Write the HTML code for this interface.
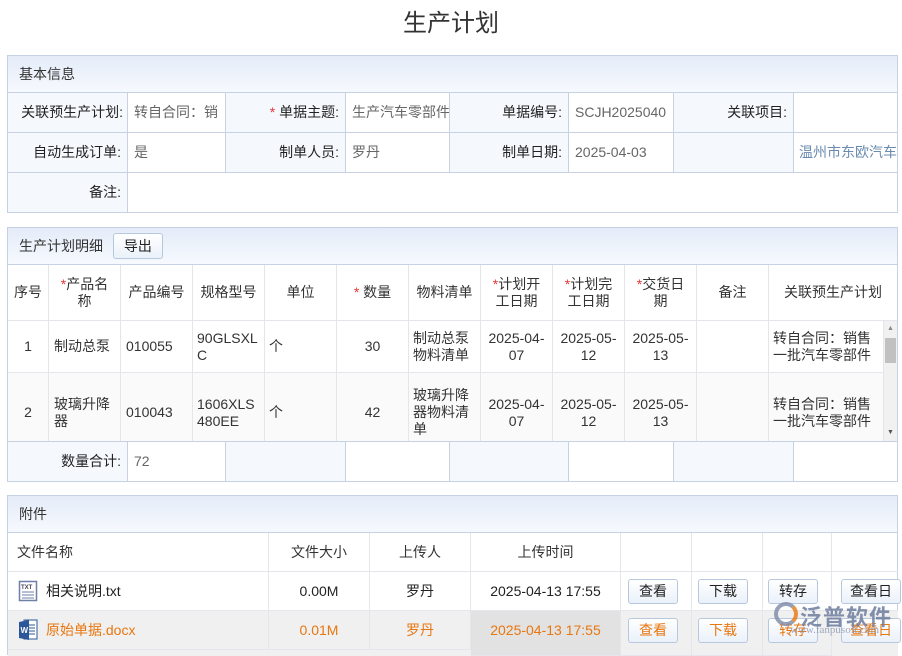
<!DOCTYPE html>
<html><head><meta charset="utf-8"><style>
*{box-sizing:border-box;margin:0;padding:0}
body{width:902px;height:649px;overflow:hidden;background:#fff;font-family:"Liberation Sans","Noto Sans CJK SC",sans-serif;font-size:14px;color:#333;position:relative}
.abs{position:absolute}
.title{left:0;width:902px;top:3px;text-align:center;font-size:24px;color:#333}
.panel{position:absolute;left:7px;width:891px;border:1px solid #c6d2e3}
.ph{height:37px;background:linear-gradient(#e4ecf8,#f6f9fe);border-bottom:1px solid #c6d2e3;padding-left:11px;line-height:36px;font-size:14px}
.c{position:absolute;border-right:1px solid #c6d2e3;border-bottom:1px solid #c6d2e3;display:flex;align-items:center;padding:0 6px;line-height:17px}
.lab{background:#f5f9fe;justify-content:flex-end;color:#222}
.val{color:#666}
.g{border-color:#e3e6ea}
.red{color:#e33}
.btn{position:absolute;height:25px;border:1px solid #b8c8dc;border-radius:3px;background:linear-gradient(#fff,#eaf1fa);text-align:center;line-height:23px;font-size:14px;color:#222}
</style></head><body>
<div class="abs title">生产计划</div>

<div class="panel" style="top:55px;height:158px">
<div class="ph">基本信息</div>
<div class="c lab" style="left:0;top:37px;width:120px;height:40px;padding:0 4px;white-space:nowrap">关联预生产计划:</div>
<div class="c val" style="left:120px;top:37px;width:98px;height:40px;white-space:nowrap;overflow:hidden">转自合同：销</div>
<div class="c lab" style="left:218px;top:37px;width:120px;height:40px"><span class="red">*</span>&nbsp;单据主题:</div>
<div class="c val" style="left:338px;top:37px;width:104px;height:40px;white-space:nowrap;overflow:hidden">生产汽车零部件</div>
<div class="c lab" style="left:442px;top:37px;width:119px;height:40px">单据编号:</div>
<div class="c val" style="left:561px;top:37px;width:105px;height:40px">SCJH2025040</div>
<div class="c lab" style="left:666px;top:37px;width:120px;height:40px">关联项目:</div>
<div class="c val" style="left:786px;top:37px;width:104px;height:40px;border-right:none"></div>
<div class="c lab" style="left:0;top:77px;width:120px;height:40px">自动生成订单:</div>
<div class="c val" style="left:120px;top:77px;width:98px;height:40px">是</div>
<div class="c lab" style="left:218px;top:77px;width:120px;height:40px">制单人员:</div>
<div class="c val" style="left:338px;top:77px;width:104px;height:40px">罗丹</div>
<div class="c lab" style="left:442px;top:77px;width:119px;height:40px">制单日期:</div>
<div class="c val" style="left:561px;top:77px;width:105px;height:40px">2025-04-03</div>
<div class="c lab" style="left:666px;top:77px;width:120px;height:40px"></div>
<div class="c val" style="left:786px;top:77px;width:104px;height:40px;border-right:none;white-space:nowrap;overflow:hidden;color:#6a8bb0;padding:0 5px">温州市东欧汽车</div>
<div class="c lab" style="left:0;top:117px;width:120px;height:39px;border-bottom:none">备注:</div>
</div>

<div class="panel" style="top:227px;height:255px">
<div class="ph">生产计划明细 <span class="btn" style="position:relative;display:inline-block;width:50px;height:26px;line-height:24px;margin-left:6px;top:0">导出</span></div>
<div style="position:absolute;left:0;top:37px;width:889px;height:176px">
<div class="c g" style="left:0;top:0;width:41px;height:56px;justify-content:center;padding:0">序号</div>
<div class="c g" style="left:41px;top:0;width:72px;height:56px;justify-content:center;text-align:center"><span><span class="red">*</span>产品名<br>称</span></div>
<div class="c g" style="left:113px;top:0;width:72px;height:56px;justify-content:center;padding:0">产品编号</div>
<div class="c g" style="left:185px;top:0;width:72px;height:56px;justify-content:center;padding:0">规格型号</div>
<div class="c g" style="left:257px;top:0;width:72px;height:56px;justify-content:center">单位</div>
<div class="c g" style="left:329px;top:0;width:72px;height:56px;justify-content:center"><span><span class="red">*</span>&nbsp;数量</span></div>
<div class="c g" style="left:401px;top:0;width:72px;height:56px;justify-content:center;padding:0">物料清单</div>
<div class="c g" style="left:473px;top:0;width:72px;height:56px;justify-content:center;text-align:center;padding:0"><span><span class="red">*</span>计划开<br>工日期</span></div>
<div class="c g" style="left:545px;top:0;width:72px;height:56px;justify-content:center;text-align:center;padding:0"><span><span class="red">*</span>计划完<br>工日期</span></div>
<div class="c g" style="left:617px;top:0;width:72px;height:56px;justify-content:center;text-align:center;padding:0"><span><span class="red">*</span>交货日<br>期</span></div>
<div class="c g" style="left:689px;top:0;width:72px;height:56px;justify-content:center">备注</div>
<div class="c g" style="left:761px;top:0;width:128px;height:56px;justify-content:center;border-right:none;padding:0">关联预生产计划</div>
<div class="c g" style="left:0;top:56px;width:41px;height:52px;justify-content:center;padding:0">1</div>
<div class="c g" style="left:41px;top:56px;width:72px;height:52px;padding:0 5px">制动总泵</div>
<div class="c g" style="left:113px;top:56px;width:72px;height:52px;padding:0 5px">010055</div>
<div class="c g" style="left:185px;top:56px;width:72px;height:52px;padding:0 4px;word-break:break-all">90GLSXLC</div>
<div class="c g" style="left:257px;top:56px;width:72px;height:52px;padding:0 4px">个</div>
<div class="c g" style="left:329px;top:56px;width:72px;height:52px;justify-content:center">30</div>
<div class="c g" style="left:401px;top:56px;width:72px;height:52px;padding:0 4px">制动总泵物料清单</div>
<div class="c g" style="left:473px;top:56px;width:72px;height:52px;justify-content:center;text-align:center">2025-04-<br>07</div>
<div class="c g" style="left:545px;top:56px;width:72px;height:52px;justify-content:center;text-align:center">2025-05-<br>12</div>
<div class="c g" style="left:617px;top:56px;width:72px;height:52px;justify-content:center;text-align:center">2025-05-<br>13</div>
<div class="c g" style="left:689px;top:56px;width:72px;height:52px"></div>
<div class="c g" style="left:761px;top:56px;width:115px;height:52px;padding:0 4px">转自合同：销售一批汽车零部件</div>
<div style="position:absolute;left:0;top:108px;width:876px;height:68px;overflow:hidden;background:#fafafa">
<div class="c g" style="left:0;top:0;width:41px;height:80px;justify-content:center;padding:0">2</div>
<div class="c g" style="left:41px;top:0;width:72px;height:80px;padding:0 5px">玻璃升降器</div>
<div class="c g" style="left:113px;top:0;width:72px;height:80px;padding:0 5px">010043</div>
<div class="c g" style="left:185px;top:0;width:72px;height:80px;padding:0 4px">1606XLS<br>480EE</div>
<div class="c g" style="left:257px;top:0;width:72px;height:80px;padding:0 4px">个</div>
<div class="c g" style="left:329px;top:0;width:72px;height:80px;justify-content:center">42</div>
<div class="c g" style="left:401px;top:0;width:72px;height:80px;padding:0 4px">玻璃升降器物料清单</div>
<div class="c g" style="left:473px;top:0;width:72px;height:80px;justify-content:center;text-align:center">2025-04-<br>07</div>
<div class="c g" style="left:545px;top:0;width:72px;height:80px;justify-content:center;text-align:center">2025-05-<br>12</div>
<div class="c g" style="left:617px;top:0;width:72px;height:80px;justify-content:center;text-align:center">2025-05-<br>13</div>
<div class="c g" style="left:689px;top:0;width:72px;height:80px"></div>
<div class="c g" style="left:761px;top:0;width:115px;height:80px;padding:0 4px">转自合同：销售一批汽车零部件</div>
</div>
<div class="abs" style="left:876px;top:56px;width:13px;height:120px;background:#f1f1f1"></div>
<div class="abs" style="left:879px;top:60px;font-size:7px;color:#888">▲</div>
<div class="abs" style="left:879px;top:164px;font-size:7px;color:#555">▼</div>
<div class="abs" style="left:877px;top:73px;width:11px;height:25px;background:#c1c1c1"></div>
</div>
<div class="c lab" style="left:0;top:213px;width:120px;height:40px;border-bottom:none;border-top:1px solid #c6d2e3">数量合计:</div>
<div class="c val" style="left:120px;top:213px;width:98px;height:40px;border-bottom:none;border-top:1px solid #c6d2e3">72</div>
<div class="c" style="left:218px;top:213px;width:120px;height:40px;border-bottom:none;border-top:1px solid #c6d2e3;background:#f5f9fe"></div>
<div class="c" style="left:338px;top:213px;width:104px;height:40px;border-bottom:none;border-top:1px solid #c6d2e3"></div>
<div class="c" style="left:442px;top:213px;width:119px;height:40px;border-bottom:none;border-top:1px solid #c6d2e3;background:#f5f9fe"></div>
<div class="c" style="left:561px;top:213px;width:105px;height:40px;border-bottom:none;border-top:1px solid #c6d2e3"></div>
<div class="c" style="left:666px;top:213px;width:120px;height:40px;border-bottom:none;border-top:1px solid #c6d2e3;background:#f5f9fe"></div>
<div class="c" style="left:786px;top:213px;width:103px;height:40px;border:none;border-top:1px solid #c6d2e3"></div>
</div>

<div class="panel" style="top:495px;height:160px;border-bottom:none">
<div class="ph">附件</div>
<div class="c g" style="left:0;top:37px;width:261px;height:39px;padding-left:9px">文件名称</div>
<div class="c g" style="left:261px;top:37px;width:101px;height:39px;justify-content:center">文件大小</div>
<div class="c g" style="left:362px;top:37px;width:101px;height:39px;justify-content:center">上传人</div>
<div class="c g" style="left:463px;top:37px;width:150px;height:39px;justify-content:center">上传时间</div>
<div class="c g" style="left:613px;top:37px;width:71px;height:39px"></div>
<div class="c g" style="left:684px;top:37px;width:71px;height:39px"></div>
<div class="c g" style="left:755px;top:37px;width:69px;height:39px"></div>
<div class="c g" style="left:824px;top:37px;width:66px;height:39px;border-right:none"></div>
<div class="c g" style="left:0;top:76px;width:261px;height:39px;padding-left:10px">
<svg width="20" height="22" viewBox="0 0 20 22"><rect x="1.5" y="1.5" width="17" height="19" fill="#fff" stroke="#6f7fa8" stroke-width="1.5"/><text x="3" y="9" font-size="6" font-family="Liberation Sans" fill="#445" font-weight="bold">TXT</text><path d="M4 12h12M4 15h12M4 18h12" stroke="#6f7fa8"/></svg>
<span style="margin-left:8px;color:#222">相关说明.txt</span></div>
<div class="c g" style="left:261px;top:76px;width:101px;height:39px;justify-content:center;color:#222">0.00M</div>
<div class="c g" style="left:362px;top:76px;width:101px;height:39px;justify-content:center;color:#222">罗丹</div>
<div class="c g" style="left:463px;top:76px;width:150px;height:39px;justify-content:center;color:#222">2025-04-13 17:55</div>
<div class="c g" style="left:613px;top:76px;width:71px;height:39px"></div>
<div class="c g" style="left:684px;top:76px;width:71px;height:39px"></div>
<div class="c g" style="left:755px;top:76px;width:69px;height:39px"></div>
<div class="c g" style="left:824px;top:76px;width:66px;height:39px;border-right:none"></div>
<div class="btn" style="left:620px;top:83px;width:50px">查看</div>
<div class="btn" style="left:690px;top:83px;width:50px">下载</div>
<div class="btn" style="left:760px;top:83px;width:50px">转存</div>
<div class="btn" style="left:833px;top:83px;width:60px;overflow:hidden;white-space:nowrap">查看日</div>
<div style="position:absolute;left:0;top:115px;width:890px;height:45px;background:#f0f0f0;color:#e8770f">
<div class="c g" style="left:0;top:0;width:261px;height:39px;padding-left:10px">
<svg width="20" height="24" viewBox="0 0 20 24"><rect x="6" y="2" width="13" height="19" fill="#fff" stroke="#2b579a"/><path d="M9 7h8M9 10h8M9 13h8M9 16h8" stroke="#2b579a"/><path d="M1 4l10-2v20L1 20z" fill="#2b579a"/><text x="2.5" y="15" font-size="8" fill="#fff" font-family="Liberation Sans" font-weight="bold">W</text></svg>
<span style="margin-left:8px">原始单据.docx</span></div>
<div class="c g" style="left:261px;top:0;width:101px;height:39px;justify-content:center">0.01M</div>
<div class="c g" style="left:362px;top:0;width:101px;height:39px;justify-content:center">罗丹</div>
<div class="c g" style="left:463px;top:0;width:150px;height:45px;justify-content:center;align-items:flex-start;padding-top:11px;background:#e2e2e2">2025-04-13 17:55</div>
<div class="c g" style="left:613px;top:0;width:71px;height:45px"></div>
<div class="c g" style="left:684px;top:0;width:71px;height:45px"></div>
<div class="c g" style="left:755px;top:0;width:69px;height:45px"></div>
<div class="btn" style="left:620px;top:7px;width:50px;color:#e8770f">查看</div>
<div class="btn" style="left:690px;top:7px;width:50px;color:#e8770f">下载</div>
<div class="btn" style="left:760px;top:7px;width:50px;color:#e8770f">转存</div>
<div class="btn" style="left:833px;top:7px;width:60px;overflow:hidden;white-space:nowrap;color:#e8770f">查看日</div>
</div>
</div>
<div class="abs" style="left:774px;top:602px;width:24px;height:24px;border-radius:50%;border:4px solid #7d8aa8;border-right-color:#e8770f;opacity:.8"></div>
<div class="abs" style="left:800px;top:600px;font-size:22px;font-weight:bold;color:#6e7d9e;opacity:.85;letter-spacing:1px">泛普软件</div>
<div class="abs" style="left:790px;top:624px;font-size:11px;color:#8a96b0;opacity:.8;font-family:'Liberation Serif',serif">www.fanpusoft.com</div>
</body></html>
